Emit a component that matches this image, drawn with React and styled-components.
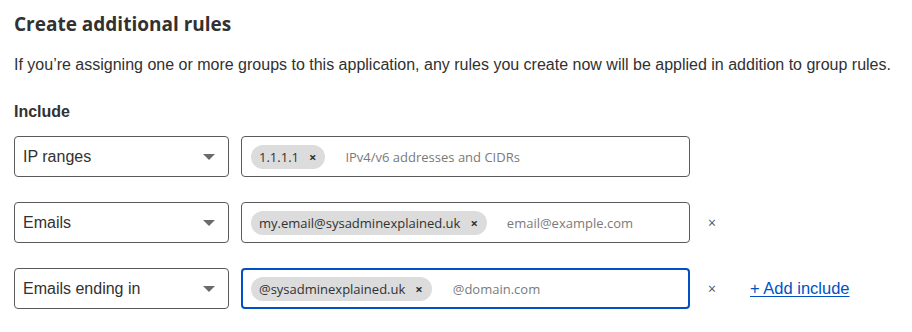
import React from "react"
import styled, { createGlobalStyle } from "styled-components"

const GlobalStyle = createGlobalStyle`
  body {
    margin: 0;
    background: #ffffff;
    font-family: "Liberation Sans", Arial, sans-serif;
    color: #313131;
  }
`

const Page = styled.div`
  padding: 11px 14px 0 14px;
`

const Title = styled.h2`
  margin: 0;
  font-family: "Open Sans", "Noto Sans", sans-serif;
  font-weight: 700;
  font-size: 19px;
  line-height: 26px;
  color: #313131;
`

const Intro = styled.p`
  margin: 17px 0 0 0;
  font-size: 16px;
  line-height: 22px;
  color: #313131;
`

const SectionLabel = styled.h3`
  margin: 25px 0 0 0;
  font-size: 16px;
  font-weight: 700;
  line-height: 22px;
  color: #313131;
`

const Rows = styled.div`
  margin-top: 13px;
  display: flex;
  flex-direction: column;
  gap: 25px;
`

const Row = styled.div`
  display: flex;
  align-items: center;
`

const Select = styled.div`
  box-sizing: border-box;
  width: 215px;
  height: 41px;
  border: 1px solid #5a5a5a;
  border-radius: 4px;
  display: flex;
  align-items: center;
  justify-content: space-between;
  padding: 0 13px 0 8px;
  font-size: 16px;
  color: #313131;
`

const Caret = styled.span`
  width: 0;
  height: 0;
  border-left: 6px solid transparent;
  border-right: 6px solid transparent;
  border-top: 6px solid #6b6b6b;
`

const TagInput = styled.div`
  box-sizing: border-box;
  width: 449px;
  height: 41px;
  margin-left: 12px;
  border: ${({ $focused }) => ($focused ? "2px solid #0051c3" : "1px solid #5a5a5a")};
  border-radius: 4px;
  display: flex;
  align-items: center;
  padding-left: ${({ $focused }) => ($focused ? "8px" : "9px")};
  font-family: "Open Sans", "Noto Sans", sans-serif;
  font-size: 13px;
`

const Chip = styled.span`
  display: inline-flex;
  align-items: center;
  height: 24px;
  padding: 0 9px 0 8px;
  border-radius: 12px;
  background: #dcdcdc;
  color: #313131;
  white-space: nowrap;
`

const ChipClose = styled.span`
  margin-left: 10px;
  font-size: 13px;
  font-weight: 700;
  color: #313131;
`

const Placeholder = styled.span`
  margin-left: ${({ $gap }) => $gap}px;
  color: #7a7a7a;
`

const RemoveButton = styled.span`
  margin-left: 17px;
  width: 10px;
  font-family: "Open Sans", sans-serif;
  font-size: 14px;
  color: #555555;
  text-align: center;
`

const AddLink = styled.a`
  margin-left: 33px;
  font-size: 16.5px;
  color: #0051c3;
  text-decoration: underline;
  text-underline-offset: 2px;
`

const rules = [
  { type: "IP ranges", value: "1.1.1.1", placeholder: "IPv4/v6 addresses and CIDRs", gap: 20 },
  { type: "Emails", value: "my.email@sysadminexplained.uk", placeholder: "email@example.com", gap: 20, removable: true },
  { type: "Emails ending in", value: "@sysadminexplained.uk", placeholder: "@domain.com", gap: 21, removable: true, focused: true, last: true },
]

export default function App() {
  return (
    <>
      <GlobalStyle />
      <Page>
        <Title>Create additional rules</Title>
        <Intro>
          If you’re assigning one or more groups to this application, any rules you create now will be applied in addition to group rules.
        </Intro>
        <SectionLabel>Include</SectionLabel>
        <Rows>
          {rules.map((rule) => (
            <Row key={rule.type}>
              <Select>
                {rule.type}
                <Caret />
              </Select>
              <TagInput $focused={rule.focused}>
                <Chip>
                  {rule.value}
                  <ChipClose>×</ChipClose>
                </Chip>
                <Placeholder $gap={rule.gap}>{rule.placeholder}</Placeholder>
              </TagInput>
              {rule.removable && <RemoveButton>×</RemoveButton>}
              {rule.last && <AddLink href="#">+ Add include</AddLink>}
            </Row>
          ))}
        </Rows>
      </Page>
    </>
  )
}
